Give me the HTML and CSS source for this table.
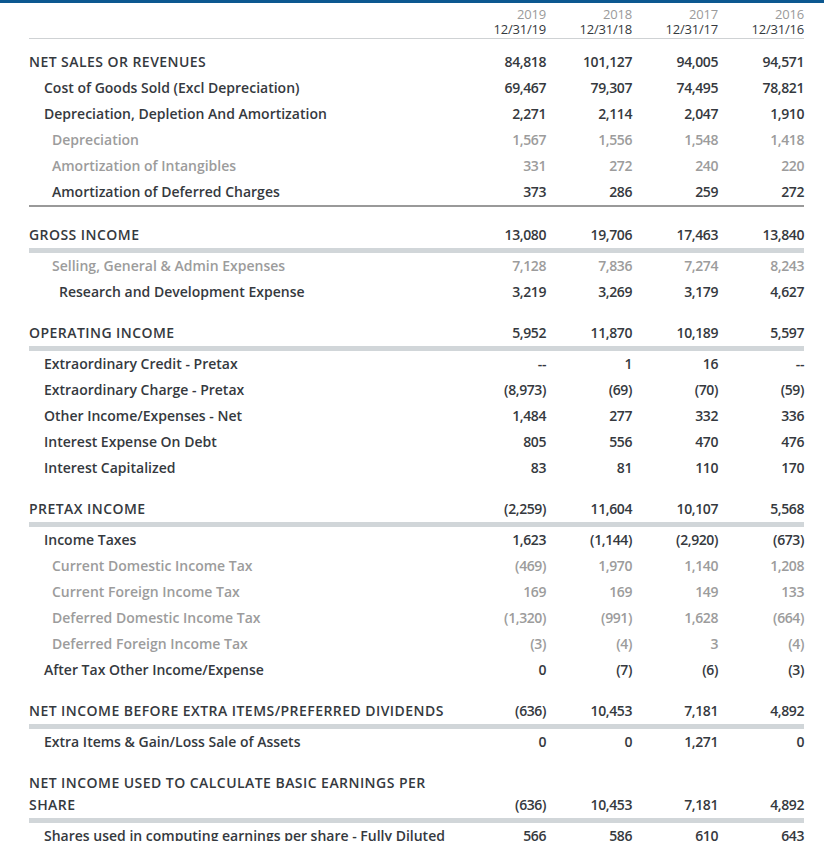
FILE: index.html
```html
<!DOCTYPE html>
<html>
<head>
<meta charset="utf-8">
<link rel="stylesheet" href="styles.css">
</head>
<body>
<div class="topbar"></div>
<div class="fin">
  <div class="head">
    <div></div>
    <div class="hc"><span class="yr">2019</span><span class="dt">12/31/19</span></div>
    <div class="hc"><span class="yr">2018</span><span class="dt">12/31/18</span></div>
    <div class="hc"><span class="yr">2017</span><span class="dt">12/31/17</span></div>
    <div class="hc"><span class="yr">2016</span><span class="dt">12/31/16</span></div>
  </div>

  <div class="sec first">
    <div class="row l0"><div class="lb">NET SALES OR REVENUES</div><div>84,818</div><div>101,127</div><div>94,005</div><div>94,571</div></div>
    <div class="row l1"><div class="lb">Cost of Goods Sold (Excl Depreciation)</div><div>69,467</div><div>79,307</div><div>74,495</div><div>78,821</div></div>
    <div class="row l1"><div class="lb">Depreciation, Depletion And Amortization</div><div>2,271</div><div>2,114</div><div>2,047</div><div>1,910</div></div>
    <div class="row l2 muted"><div class="lb">Depreciation</div><div>1,567</div><div>1,556</div><div>1,548</div><div>1,418</div></div>
    <div class="row l2 muted"><div class="lb">Amortization of Intangibles</div><div>331</div><div>272</div><div>240</div><div>220</div></div>
    <div class="row l2 last-line"><div class="lb">Amortization of Deferred Charges</div><div>373</div><div>286</div><div>259</div><div>272</div></div>
  </div>

  <div class="sec">
    <div class="row total"><div class="lb">GROSS INCOME</div><div>13,080</div><div>19,706</div><div>17,463</div><div>13,840</div></div>
    <div class="row l2 muted"><div class="lb">Selling, General &amp; Admin Expenses</div><div>7,128</div><div>7,836</div><div>7,274</div><div>8,243</div></div>
    <div class="row l3"><div class="lb">Research and Development Expense</div><div>3,219</div><div>3,269</div><div>3,179</div><div>4,627</div></div>
  </div>

  <div class="sec">
    <div class="row total"><div class="lb">OPERATING INCOME</div><div>5,952</div><div>11,870</div><div>10,189</div><div>5,597</div></div>
    <div class="row l1"><div class="lb">Extraordinary Credit - Pretax</div><div>--</div><div>1</div><div>16</div><div>--</div></div>
    <div class="row l1"><div class="lb">Extraordinary Charge - Pretax</div><div>(8,973)</div><div>(69)</div><div>(70)</div><div>(59)</div></div>
    <div class="row l1"><div class="lb">Other Income/Expenses - Net</div><div>1,484</div><div>277</div><div>332</div><div>336</div></div>
    <div class="row l1"><div class="lb">Interest Expense On Debt</div><div>805</div><div>556</div><div>470</div><div>476</div></div>
    <div class="row l1"><div class="lb">Interest Capitalized</div><div>83</div><div>81</div><div>110</div><div>170</div></div>
  </div>

  <div class="sec">
    <div class="row total"><div class="lb">PRETAX INCOME</div><div>(2,259)</div><div>11,604</div><div>10,107</div><div>5,568</div></div>
    <div class="row l1"><div class="lb">Income Taxes</div><div>1,623</div><div>(1,144)</div><div>(2,920)</div><div>(673)</div></div>
    <div class="row l2 muted"><div class="lb">Current Domestic Income Tax</div><div>(469)</div><div>1,970</div><div>1,140</div><div>1,208</div></div>
    <div class="row l2 muted"><div class="lb">Current Foreign Income Tax</div><div>169</div><div>169</div><div>149</div><div>133</div></div>
    <div class="row l2 muted"><div class="lb">Deferred Domestic Income Tax</div><div>(1,320)</div><div>(991)</div><div>1,628</div><div>(664)</div></div>
    <div class="row l2 muted"><div class="lb">Deferred Foreign Income Tax</div><div>(3)</div><div>(4)</div><div>3</div><div>(4)</div></div>
    <div class="row l1"><div class="lb">After Tax Other Income/Expense</div><div>0</div><div>(7)</div><div>(6)</div><div>(3)</div></div>
  </div>

  <div class="sec">
    <div class="row total"><div class="lb">NET INCOME BEFORE EXTRA ITEMS/PREFERRED DIVIDENDS</div><div>(636)</div><div>10,453</div><div>7,181</div><div>4,892</div></div>
    <div class="row l1"><div class="lb">Extra Items &amp; Gain/Loss Sale of Assets</div><div>0</div><div>0</div><div>1,271</div><div>0</div></div>
  </div>

  <div class="sec">
    <div class="row total two"><div class="lb">NET INCOME USED TO CALCULATE BASIC EARNINGS PER<br>SHARE</div><div>(636)</div><div>10,453</div><div>7,181</div><div>4,892</div></div>
    <div class="row l1"><div class="lb">Shares used in computing earnings per share - Fully Diluted</div><div>566</div><div>586</div><div>610</div><div>643</div></div>
  </div>
</div>
</body>
</html>
```

FILE: styles.css
```css
html, body {
  margin: 0;
  padding: 0;
  background: #fff;
}
body {
  font-family: "Open Sans", "Liberation Sans", sans-serif;
  font-size: 14px;
  color: #35393e;
  overflow: hidden;
}
.topbar {
  height: 3px;
  background: #0c5890;
}
.fin {
  margin: 0 20px 0 29px;
  width: 775px;
}
.head,
.row {
  display: grid;
  grid-template-columns: 1fr 86px 86px 86px 86px;
  text-align: right;
}
.head {
  padding: 4px 0 1px;
  border-bottom: 1px solid #cfd2d4;
}
.hc {
  display: flex;
  flex-direction: column;
  align-items: flex-end;
  line-height: 15px;
  font-size: 13px;
  letter-spacing: -0.2px;
}
.yr {
  color: #9a9a9a;
}
.dt {
  color: #35393e;
}
.sec {
  margin-top: 15px;
}
.sec.first {
  margin-top: 10px;
}
.row {
  height: 26px;
  line-height: 26px;
  font-weight: 600;
  white-space: nowrap;
}
.row > div:not(.lb) {
  letter-spacing: -0.4px;
}
.row .lb {
  text-align: left;
  letter-spacing: 0;
}
.total .lb,
.l0 .lb {
  letter-spacing: 0.45px;
}
.l0 .lb { padding-left: 0; }
.l1 .lb { padding-left: 15px; }
.l2 .lb { padding-left: 23px; }
.l3 .lb { padding-left: 30px; }
.muted {
  color: #9c9c9c;
}
.last-line {
  border-bottom: 2px solid #999;
}
.total {
  border-bottom: 5px solid #d1d6d9;
}
.total.two {
  line-height: 22px;
  padding: 2px 0 2px;
  box-sizing: border-box;
  height: 53px;
  align-items: end;
}
.total.two .lb {
  white-space: normal;
}
```
